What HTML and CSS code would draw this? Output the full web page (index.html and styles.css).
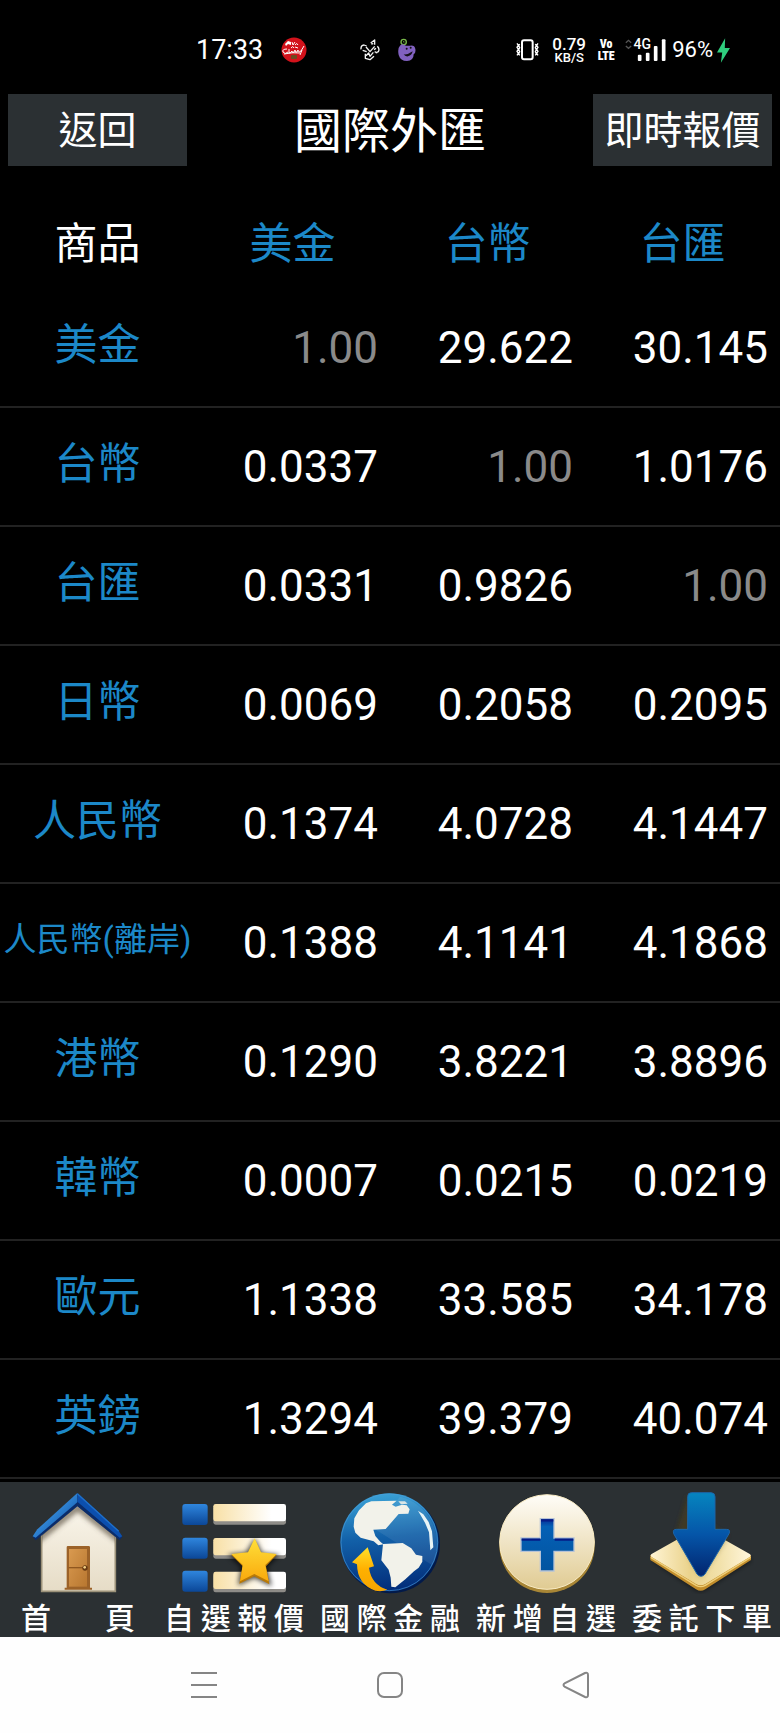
FILE: index.html
```html
<!DOCTYPE html>
<html lang="zh-Hant">
<head>
<meta charset="utf-8">
<meta name="viewport" content="width=device-width, initial-scale=1">
<title>國際外匯</title>
<link rel="stylesheet" href="styles.css">
</head>
<body>
<div class="status">
  <div class="status-left">
    <span class="clock">17:33</span>
    <svg class="app-red" viewBox="0 0 26 26" aria-hidden="true">
      <circle cx="13" cy="13" r="12.5" fill="#d3121b"/>
      <path d="M4 7l3-3l3 1v3l-3-1l-2 2z" fill="#fff"/>
      <path d="M11 5l1 3l2-3M14 8q2-3 3 0M10 11q2-3 3 0M14 10l3 1" fill="none" stroke="#fff" stroke-width="1"/>
      <path d="M6 12q-5 0-4 3q2 3 5 0M8 12v4q2 0 3-2q0 3 2 1l1-2q0 3 2 2l1-2q0 3 3 1l3-5M21 13l-2 5M3 17q9-2 16-1" fill="none" stroke="#fff" stroke-width="1"/>
      <rect x="10" y="18" width="6" height="4" rx="1" fill="#6d4a22"/>
    </svg>
    <svg class="app-cross" viewBox="0 0 60 66" aria-hidden="true">
      <g fill="none" stroke="#f4f4f4" stroke-width="4" stroke-linejoin="round">
        <path d="M3 31q-1-12 9-13l8 3M32 12l12-9v14M34 15l6-1M52 22q8 8 3 16l-8 4M18 24l12 14l14-16M48 28l-6 4M8 34l12 4M44 38l8 4M16 44v14l14 4l12-10M18 50l8-8l4 10l10-12"/>
      </g>
    </svg>
    <svg class="app-purple" viewBox="0 0 54 70" aria-hidden="true">
      <circle cx="17" cy="11" r="8" fill="none" stroke="#79b84a" stroke-width="4"/>
      <path d="M15 12q3-5 5 0" fill="none" stroke="#79b84a" stroke-width="3"/>
      <path d="M18 19q8 5 18 3q14-2 16 10q2 12-5 16q0 19-20 20q-20 0-25-18q-4-20 4-28q5-6 12-3z" fill="#8161c0"/>
      <circle cx="26" cy="31" r="3" fill="#111"/><circle cx="38" cy="28" r="3" fill="#111"/>
      <path d="M17 48q12 2 27-9q-2 12-14 15q-9 1-13-6z" fill="#141018"/>
    </svg>
  </div>
  <div class="status-right">
    <svg class="vibrate" viewBox="0 0 69 66" aria-hidden="true">
      <g fill="none" stroke="#fff">
        <rect x="18" y="4" width="32" height="57" rx="6" stroke-width="6"/>
        <path d="M3 13l4 6l-4 6l4 6l-4 6l4 6l-4 6M11 15l-3 5l3 6l-3 6l3 6l-3 6l3 5M66 13l-4 6l4 6l-4 6l4 6l-4 6l4 6M58 15l3 5l-3 6l3 6l-3 6l3 6l-3 5" stroke-width="4"/>
      </g>
    </svg>
    <span class="speed"><b>0.79</b><i>KB/S</i></span>
    <span class="volte"><b>Vo</b><b>LTE</b></span>
    <svg class="signal" viewBox="0 0 122 72" aria-hidden="true">
      <g fill="none" stroke="#555" stroke-width="4"><path d="M2 14l8-7l8 7M2 24l8 7l8-7"/></g>
      <text x="25" y="34" class="signal-text">4G</text>
      <g fill="#fff"><rect x="38" y="50" width="11" height="19" rx="3"/><rect x="62" y="44" width="11" height="25" rx="3"/><rect x="86" y="24" width="11" height="45" rx="3"/><rect x="110" y="4" width="11" height="65" rx="3"/></g>
    </svg>
    <span class="battery">96%</span>
    <svg class="bolt" viewBox="0 0 40 76" aria-hidden="true"><path d="M25 0L0 44h16l-4 32l28-46H24z" fill="#2fce7e"/></svg>
  </div>
</div>

<header class="bar">
  <button class="bar-btn" type="button">返回</button>
  <h1 class="title">國際外匯</h1>
  <button class="bar-btn" type="button">即時報價</button>
</header>

<main>
  <table class="rates">
    <thead>
      <tr><th class="plain" scope="col">商品</th><th scope="col">美金</th><th scope="col">台幣</th><th scope="col">台匯</th></tr>
    </thead>
    <tbody>
      <tr><th scope="row">美金</th><td class="same">1.00</td><td>29.622</td><td>30.145</td></tr>
      <tr><th scope="row">台幣</th><td>0.0337</td><td class="same">1.00</td><td>1.0176</td></tr>
      <tr><th scope="row">台匯</th><td>0.0331</td><td>0.9826</td><td class="same">1.00</td></tr>
      <tr><th scope="row">日幣</th><td>0.0069</td><td>0.2058</td><td>0.2095</td></tr>
      <tr><th scope="row">人民幣</th><td>0.1374</td><td>4.0728</td><td>4.1447</td></tr>
      <tr><th scope="row" class="long">人民幣(離岸)</th><td>0.1388</td><td>4.1141</td><td>4.1868</td></tr>
      <tr><th scope="row">港幣</th><td>0.1290</td><td>3.8221</td><td>3.8896</td></tr>
      <tr><th scope="row">韓幣</th><td>0.0007</td><td>0.0215</td><td>0.0219</td></tr>
      <tr><th scope="row">歐元</th><td>1.1338</td><td>33.585</td><td>34.178</td></tr>
      <tr><th scope="row">英鎊</th><td>1.3294</td><td>39.379</td><td>40.074</td></tr>
    </tbody>
  </table>
</main>

<nav class="tabs">
  <button class="tab" type="button">
    <svg class="tab-icon" viewBox="78 60 312 312" aria-hidden="true">
      <defs>
        <linearGradient id="wall" x1="0" y1="0" x2="0" y2="1"><stop offset="0" stop-color="#faf6ec"/><stop offset="1" stop-color="#e6dcc6"/></linearGradient>
        <linearGradient id="roofL" x1="0" y1="0" x2="1" y2="1"><stop offset="0.35" stop-color="#3b93e0"/><stop offset="0.8" stop-color="#1259ae"/></linearGradient>
        <linearGradient id="door" x1="0" y1="0" x2="1" y2="1"><stop offset="0" stop-color="#d99a50"/><stop offset="1" stop-color="#b87730"/></linearGradient>
        <filter id="soft" x="-20%" y="-20%" width="140%" height="140%"><feGaussianBlur stdDeviation="8"/></filter>
        <clipPath id="wallClip"><path d="M125 195L233 105L346 198V365H125z"/></clipPath>
      </defs>
      <path d="M125 195L233 105L346 198V364H125z" fill="url(#wall)" stroke="#9c927a" stroke-width="5"/>
      <g clip-path="url(#wallClip)"><path d="M112 210L233 112L358 210" fill="none" stroke="#5a5040" stroke-opacity=".7" stroke-width="20" filter="url(#soft)"/></g>
      <path d="M98 200L232 92L367 200L359 211L232 109L107 211z" fill="#0a2c6b"/>
      <path d="M98 199L112 178L232 69V97L107 203z" fill="url(#roofL)"/>
      <path d="M232 69L354 180L367 199L359 203L232 95z" fill="#0c4fae"/>
      <path d="M232 71L356 184" fill="none" stroke="#1e70ca" stroke-width="4"/>
      <path d="M194 359h82v-6h-6V232q0-4-4-4h-62q-4 0-4 4v121h-6z" fill="#9c6228"/>
      <path d="M207 237h54v113h-54z" fill="url(#door)"/>
      <path d="M206 293h56" stroke="#90571f" stroke-width="4"/>
      <circle cx="255" cy="294" r="8" fill="#683a12"/><circle cx="254" cy="292" r="4" fill="#f3cf85"/>
    </svg>
    <span class="tab-label short">首頁</span>
  </button>
  <button class="tab" type="button">
    <svg class="tab-icon" viewBox="66 60 312 312" aria-hidden="true">
      <defs>
        <linearGradient id="sq" x1="0" y1="0" x2="0" y2="1"><stop offset="0" stop-color="#2f86de"/><stop offset="1" stop-color="#0b4798"/></linearGradient>
        <linearGradient id="row" x1="0" y1="0" x2="1" y2="0"><stop offset="0" stop-color="#f8e0a6"/><stop offset=".8" stop-color="#fff"/></linearGradient>
        <linearGradient id="star" x1="0" y1="0" x2="0" y2="1"><stop offset="0" stop-color="#ffe03a"/><stop offset="1" stop-color="#f9a90c"/></linearGradient>
      </defs>
      <g fill="#8e8c88"><rect x="160" y="108" width="218" height="56" rx="7"/><rect x="160" y="210" width="218" height="56" rx="7"/><rect x="160" y="311" width="218" height="56" rx="7"/></g>
      <g fill="url(#row)"><rect x="160" y="102" width="218" height="52" rx="7"/><rect x="160" y="204" width="218" height="52" rx="7"/><rect x="160" y="305" width="218" height="52" rx="7"/></g>
      <g fill="url(#sq)"><rect x="67" y="102" width="76" height="63" rx="9"/><rect x="67" y="203" width="76" height="63" rx="9"/><rect x="67" y="302" width="76" height="63" rx="9"/></g>
      <path d="M284 215L303 253L348 258L315 290L328 340L283 318L240 338L248 289L214 257L261 252z" fill="#000" stroke="#000" stroke-width="10" opacity=".7" filter="url(#soft)"/>
      <path d="M284 207L303 250L350 255L318 289L328 343L283 319L238 341L248 289L214 255L264 250z" fill="#b87908"/>
      <path d="M284 205L303 247L350 252L316 285L326 334L283 312L240 334L248 285L214 252L264 247z" fill="url(#star)"/>
    </svg>
    <span class="tab-label">自選報價</span>
  </button>
  <button class="tab" type="button">
    <svg class="tab-icon" viewBox="84 60 312 312" aria-hidden="true">
      <defs>
        <linearGradient id="sea" x1=".4" y1="0" x2=".5" y2="1"><stop offset="0" stop-color="#3aa2d6"/><stop offset=".45" stop-color="#1260a8"/><stop offset="1" stop-color="#022c79"/></linearGradient>
        <linearGradient id="arrow" x1="0" y1="0" x2="0" y2="1"><stop offset="0" stop-color="#ffe02a"/><stop offset=".5" stop-color="#ffb000"/><stop offset="1" stop-color="#f6a500"/></linearGradient>
      </defs>
      <circle cx="242" cy="222" r="148" fill="#021a4a"/>
      <circle cx="238" cy="217" r="147" fill="url(#sea)"/>
      <circle cx="238" cy="217" r="145" fill="none" stroke="#4b9ddb" stroke-opacity=".6" stroke-width="3"/>
      <path d="M270 80A145 145 0 0 1 366 285L190 175z" fill="#fff" fill-opacity=".08"/>
      <path d="M168 100L184 94L260 92L246 104L257 110L276 104L290 106L299 118L295 131L266 132L227 177L190 179L196 198L211 215L220 223L205 226L191 214L152 203L136 188L131 170L133 145L147 121z" fill="#f2f2ea"/>
      <path d="M265 94h20l8 7l-20 2z" fill="#d8e5e5"/>
      <path d="M219 222L278 219L304 235L318 254L337 258L337 275L326 293L312 304L286 328L256 352L244 350L242 323L236 299L214 271z" fill="#f2f2ea"/>
      <path d="M324 122L340 133L356 156L366 184L370 232L361 241L357 187L345 158z" fill="#e8f4f6"/>
      <path d="M173 232L126 277L141 283Q142 344 196 362Q216 366 232 359Q184 344 177 293L192 289z" fill="url(#arrow)"/>
    </svg>
    <span class="tab-label">國際金融</span>
  </button>
  <button class="tab" type="button">
    <svg class="tab-icon" viewBox="72 60 312 312" aria-hidden="true">
      <defs>
        <linearGradient id="coin" x1="0" y1="0" x2="0" y2="1"><stop offset="0" stop-color="#fffdf8"/><stop offset="1" stop-color="#e0cb92"/></linearGradient>
        <linearGradient id="plus" x1="0" y1="0" x2="0" y2="1"><stop offset="0" stop-color="#052a94"/><stop offset=".15" stop-color="#0460b5"/><stop offset="1" stop-color="#0254a0"/></linearGradient>
      </defs>
      <circle cx="231" cy="226" r="143" fill="#a88636"/>
      <circle cx="231" cy="216" r="142" fill="url(#coin)" stroke="#f8eac2" stroke-width="3"/>
      <path d="M211 146h41v58h60v40h-60v59h-41v-59h-58v-40h58z" fill="url(#plus)" stroke="#b7c3d6" stroke-width="4"/>
      <path d="M213 151h37M155 209h56M254 209h56" stroke="#061b86" stroke-width="7"/>
    </svg>
    <span class="tab-label">新增自選</span>
  </button>
  <button class="tab" type="button">
    <svg class="tab-icon" viewBox="90 60 312 312" aria-hidden="true">
      <defs>
        <linearGradient id="down" x1="0" y1="0" x2="0" y2="1"><stop offset="0" stop-color="#0685bf"/><stop offset=".5" stop-color="#0555a8"/><stop offset="1" stop-color="#02246e"/></linearGradient>
        <linearGradient id="tray" x1="0" y1="0" x2="1" y2="0"><stop offset="0" stop-color="#fff4d4"/><stop offset=".4" stop-color="#ead28a"/><stop offset=".7" stop-color="#f2e2ac"/><stop offset="1" stop-color="#fff6dc"/></linearGradient>
      </defs>
      <path d="M98 272L242 190L396 270L250 362H232z" fill="#000" fill-opacity=".6" filter="url(#soft)"/>
      <path d="M91 256V270L228 358Q242 367 256 358L393 270V256L242 200z" fill="#c18d2c"/>
      <path d="M96 251L229 176Q242 168 255 176L388 251Q396 256 388 262L256 342Q242 350 228 342L96 262Q88 256 96 251z" fill="url(#tray)"/>
      <path d="M92 262L228 346Q242 354 256 346L392 262" fill="none" stroke="#efcf77" stroke-width="4"/>
      <path d="M203 76L170 185L242 322L325 195L280 170z" fill="#54400e" fill-opacity=".5" filter="url(#soft)"/>
      <path d="M214 68h59q12 0 12 12v98h34q14 0 8 13L255 312q-12 14-24 0L161 191q-4-13 8-13h34V80q0-12 11-12z" fill="url(#down)" stroke="#1d65a8" stroke-width="3"/>
    </svg>
    <span class="tab-label">委託下單</span>
  </button>
</nav>

<div class="sysnav">
  <button class="sys-btn" type="button" aria-label="選單"><svg class="sys-icon" viewBox="0 0 28 28"><path d="M1 2h26M1 14h26M1 26h26"/></svg></button>
  <button class="sys-btn" type="button" aria-label="主畫面"><svg class="sys-icon" viewBox="0 0 28 28"><rect x="2" y="2" width="24" height="24" rx="6"/></svg></button>
  <button class="sys-btn" type="button" aria-label="上一頁"><svg class="sys-icon" viewBox="0 0 28 28"><path d="M23 2L3 12q-3 2 0 4l20 10q3 1 3-2V4q0-3-3-2z"/></svg></button>
</div>
</body>
</html>
```
FILE: styles.css
```css
* { box-sizing: border-box; }

body {
  margin: 0;
  background: #000;
  color: #fff;
  font-family: Roboto, "Noto Sans CJK TC", sans-serif;
}

button {
  margin: 0;
  padding: 0;
  border: 0;
  background: none;
  color: inherit;
  font-family: inherit;
}

svg { display: block; flex: none; }

.status {
  display: flex;
  align-items: center;
  justify-content: space-between;
  height: 94px;
  padding: 6px 50px 0 196px;
}

.status-left,
.status-right { display: flex; align-items: center; }

.clock { font-size: 27px; line-height: 32px; }
.app-red { width: 26px; height: 26px; margin-left: 18px; }
.app-cross { width: 20px; height: 22px; margin-left: 53px; }
.app-purple { width: 18px; height: 24px; margin-left: 18px; }

.vibrate { width: 23px; height: 22px; }
.speed,
.volte {
  display: flex;
  flex-direction: column;
  align-items: center;
}
.speed { width: 36px; margin-left: 12px; }
.speed b { font-size: 17px; line-height: 14px; font-weight: 500; }
.speed i { font-size: 13px; line-height: 13px; font-weight: 500; font-style: normal; }
.volte {
  width: 18px;
  margin-left: 10px;
  font: bold 12px/12px "Roboto Condensed", "Liberation Sans Narrow", "Liberation Sans", sans-serif;
}
.signal { width: 41px; height: 24px; margin-left: 10px; overflow: visible; }
.signal-text { font-size: 42px; fill: #fff; font-weight: 500; }
.battery { margin-left: 6px; font-size: 22px; line-height: 26px; }
.bolt { width: 13px; height: 25px; margin-left: 4px; }

.bar {
  display: flex;
  align-items: center;
  justify-content: space-between;
  padding: 0 8px;
}

.bar-btn {
  width: 179px;
  height: 72px;
  padding-top: 2px;
  background: #2b3033;
  font-size: 39px;
  line-height: 70px;
}

.title {
  margin: 0;
  padding-top: 4px;
  font-size: 48px;
  line-height: 68px;
  font-weight: 400;
}

.rates {
  width: 100%;
  table-layout: fixed;
  border-collapse: separate;
  border-spacing: 0;
}

.rates th {
  padding: 0 0 6px;
  color: #1c88c8;
  font-size: 43px;
  line-height: 52px;
  font-weight: 400;
  white-space: nowrap;
}
.rates thead th { height: 123px; padding: 32px 0 0; }
.rates thead .plain { color: #fff; }
.rates .long { font-size: 33px; }

.rates td {
  padding: 0 12px 0 0;
  font-size: 44px;
  line-height: 52px;
  text-align: right;
}
.rates .same { color: #8a8a8a; }
.rates tbody th,
.rates tbody td {
  height: 119px;
  border-bottom: 2px solid #222;
}

.tabs {
  display: grid;
  grid-template-columns: repeat(5, 1fr);
  margin-top: 3px;
  background: #2b3033;
}

.tab {
  display: flex;
  flex-direction: column;
  align-items: center;
  padding-top: 8px;
}

.tab-icon { width: 104px; height: 104px; }

.tab-label {
  width: 140px;
  padding-top: 7px;
  font-size: 30px;
  line-height: 36px;
  font-weight: 500;
  text-align: justify;
  text-align-last: justify;
}
.tab-label.short { width: 114px; }

.sysnav {
  display: grid;
  grid-template-columns: repeat(3, 1fr);
  padding: 0 111px;
  background: #fefefe;
}

.sys-btn {
  display: flex;
  align-items: center;
  justify-content: center;
  height: 96px;
}

.sys-icon {
  width: 28px;
  height: 28px;
  fill: none;
  stroke: #858585;
  stroke-width: 2;
}
```
